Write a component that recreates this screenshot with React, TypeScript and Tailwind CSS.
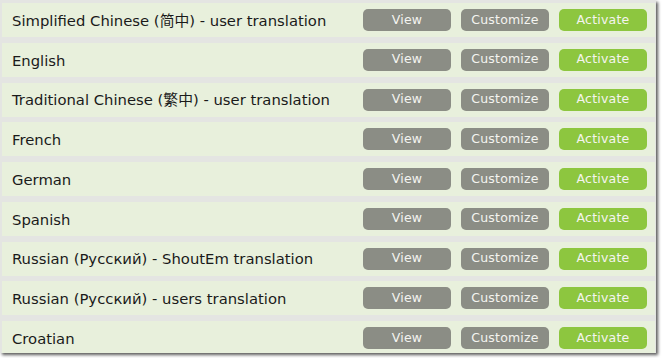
import React from "react";

const rows = [
  "Simplified Chinese (简中) - user translation",
  "English",
  "Traditional Chinese (繁中) - user translation",
  "French",
  "German",
  "Spanish",
  "Russian (Русский) - ShoutEm translation",
  "Russian (Русский) - users translation",
  "Croatian",
];

export default function App() {
  return (
    <div className="w-[662px] h-[358px] bg-white">
      <div
        className="w-[656px] h-[353px] bg-[#e4e5e2] overflow-hidden flex flex-col gap-[5.75px] pt-[3px] pl-[2px] pr-[1px] shadow-[2px_2px_3px_rgba(0,0,0,0.65)]"
        style={{ fontFamily: '"DejaVu Sans", Verdana, "Noto Sans CJK SC", sans-serif' }}
      >
        {rows.map((r) => (
          <div
            key={r}
            className="h-[34px] shrink-0 bg-[#e8f0dc] flex items-center pl-[10px] pr-[8px]"
          >
            <div className="flex-1 text-[14.8px] pt-[2px] text-[#1a1a1a]">{r}</div>
            <div className="flex gap-[10px] text-[12.5px] tracking-[0.2px] text-[#f4f4f0]">
              <div className="w-[88px] h-[22px] rounded-[5px] bg-[#8b8d85] flex items-center justify-center">View</div>
              <div className="w-[88px] h-[22px] rounded-[5px] bg-[#8b8d85] flex items-center justify-center">Customize</div>
              <div className="w-[88px] h-[22px] rounded-[5px] bg-[#8dc63f] flex items-center justify-center">Activate</div>
            </div>
          </div>
        ))}
      </div>
    </div>
  );
}
